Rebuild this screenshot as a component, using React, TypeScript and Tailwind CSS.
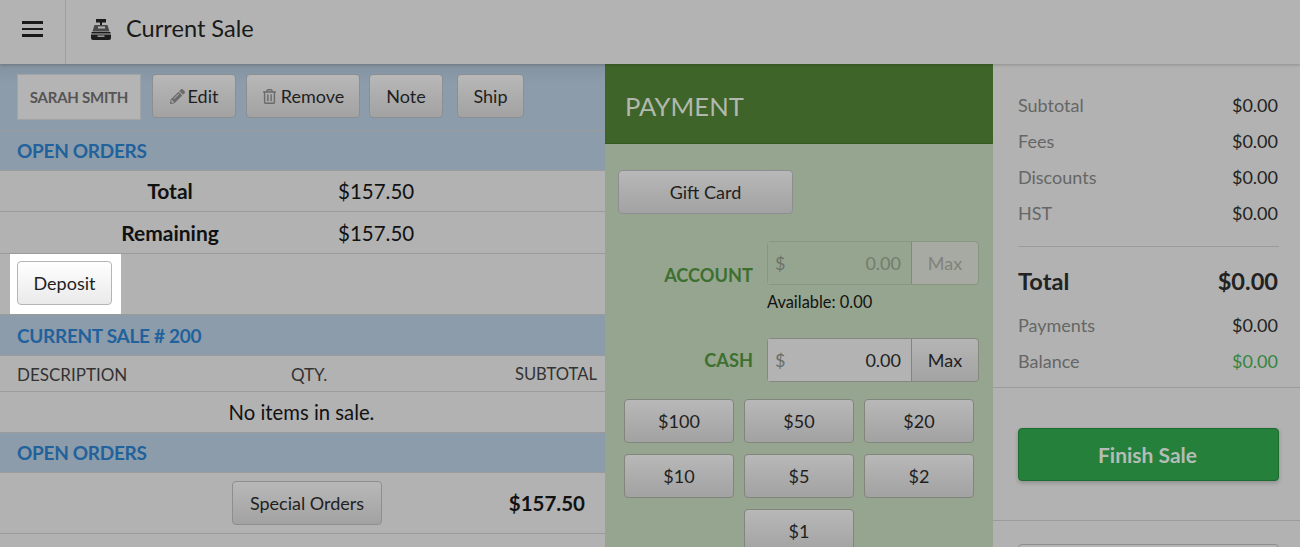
import { FaPencilAlt, FaRegTrashAlt } from "react-icons/fa";

const btn =
  "h-[44px] rounded border border-[#8b8f92] bg-gradient-to-b from-[#b8b8b8] to-[#a2a2a2] text-[18px] text-[#1f1f1f]";

const cashButtons = ["$100", "$50", "$20", "$10", "$5", "$2"];

const summary = [
  { label: "Subtotal", value: "$0.00" },
  { label: "Fees", value: "$0.00" },
  { label: "Discounts", value: "$0.00" },
  { label: "HST", value: "$0.00" },
];

function CashRegister() {
  return (
    <svg viewBox="0 0 22 21" className="h-[21px] w-[22px]" fill="#1c1c1c">
      <path d="M6 0h10v3.5h-4V6h-2V3.5H6z" />
      <path d="M4.5 6h13l2 6.5h-17z" fill="#4a4a4a" />
      <rect x="8" y="7.5" width="7" height="2" fill="#b3b3b3" />
      <path d="M1.5 13h19v1.5h-19z" />
      <path d="M1 15.5h20V19a2 2 0 0 1-2 2H3a2 2 0 0 1-2-2z" />
      <rect x="7.5" y="16.5" width="7" height="1.3" fill="#b3b3b3" />
    </svg>
  );
}

function SectionHeader({ title, className }: { title: string; className: string }) {
  return (
    <div className={`flex items-center border-b border-[#9b9b9b] bg-[#8c9cab] pl-[17px] pt-[2px] text-[19px] font-bold tracking-[-0.3px] text-[#22629c] ${className}`}>
      {title}
    </div>
  );
}

function TotalRow({ label, value, className }: { label: string; value: string; className: string }) {
  return (
    <div className={`flex items-center border-b border-[#9b9b9b] text-[#111] ${className}`}>
      <div className="w-[338px] pl-[2px] text-center text-[21px] font-bold">{label}</div>
      <div className="text-[20.5px]">{value}</div>
    </div>
  );
}

function PayInput({ label, disabled }: { label: string; disabled?: boolean }) {
  return (
    <div className="flex items-center">
      <div className={`w-[135px] pt-[2px] text-right text-[18.2px] font-bold text-[#3d7030] ${disabled ? "translate-y-[12px]" : ""}`}>
        {label}
      </div>
      <div className={`ml-[14px] flex h-[44px] w-[212px] rounded border border-[#84897f] text-[18px] ${disabled ? "border-[#89957f] opacity-90" : ""}`}>
        <div className={`flex w-[144px] items-center justify-between border-r border-[#7f8580] pl-[7px] pr-[10px] ${disabled ? "bg-[#96a58f] text-[#6e7a69]" : "bg-[#b3b3b3] text-[#222]"}`}>
          <span className="text-[#686e68]">$</span>
          <span>0.00</span>
        </div>
        <div className={`flex flex-1 items-center justify-center rounded-r ${disabled ? "bg-[#a9aba5] text-[#7d807b]" : "bg-gradient-to-b from-[#b5b5b5] to-[#a3a3a3] text-[#222]"}`}>
          Max
        </div>
      </div>
    </div>
  );
}

export default function App() {
  return (
    <div className="h-screen overflow-hidden bg-[#b2b2b2] font-['Lato','Open_Sans',sans-serif]">
      <header className="relative z-10 flex h-[64px] bg-[#b3b3b3] shadow-[0_1px_3px_rgba(0,0,0,0.2)]">
        <div className="flex w-[66px] items-center justify-center border-r border-[#a0a0a0] pb-[6px] pr-[1px]">
          <div className="flex w-[21px] flex-col gap-[4px]">
            <span className="h-[2.5px] bg-[#1a1a1a]" />
            <span className="h-[2.5px] bg-[#1a1a1a]" />
            <span className="h-[2.5px] bg-[#1a1a1a]" />
          </div>
        </div>
        <div className="ml-[24px] flex items-center gap-[14px] pb-[6px] text-[23.6px] text-[#1a1a1a]">
          <CashRegister />
          <span>Current Sale</span>
        </div>
      </header>

      <main className="flex h-[483px]">
        <section className="w-[605px] shrink-0">
          <div className="flex h-[67px] border-b border-[#9b9b9b] bg-gradient-to-b from-[#84929f] to-[#8c9cab] to-30% pl-[17px] pt-[10px]">
            <div className="mr-[11px] flex h-[46px] w-[124px] items-center justify-center border border-[#a0a4a6] bg-[#b4b4b4] text-[15px] font-bold tracking-[-0.25px] text-[#555]">
              SARAH SMITH
            </div>
            <button className={`${btn} mr-[10px] flex w-[84px] items-center justify-center gap-[3px]`}>
              <FaPencilAlt className="text-[15px] text-[#6b6b6b]" />
              Edit
            </button>
            <button className={`${btn} mr-[9px] flex w-[114px] items-center justify-center gap-[4px]`}>
              <FaRegTrashAlt className="text-[15px] text-[#6b6b6b]" />
              Remove
            </button>
            <button className={`${btn} mr-[14px] w-[74px]`}>Note</button>
            <button className={`${btn} w-[67px]`}>Ship</button>
          </div>
          <SectionHeader title="OPEN ORDERS" className="h-[40px]" />
          <TotalRow label="Total" value="$157.50" className="h-[41px]" />
          <TotalRow label="Remaining" value="$157.50" className="h-[42px] pt-[1px]" />
          <div className="h-[61px] border-b border-[#9b9b9b]">
            <div className="ml-[10px] h-[60px] w-[111px] bg-white pl-[7px] pt-[7px]">
              <button className="h-[44px] w-[95px] rounded border border-[#b5b5b5] bg-gradient-to-b from-white to-[#eaeaea] text-[18px] text-[#222]">
                Deposit
              </button>
            </div>
          </div>
          <SectionHeader title="CURRENT SALE # 200" className="h-[41px]" />
          <div className="flex h-[36px] items-center border-b border-[#9b9b9b] pl-[17px] pr-[8px] pt-[2px] text-[17px] text-[#333]">
            <div className="w-[274px]">DESCRIPTION</div>
            <div>QTY.</div>
            <div className="flex-1 text-right text-[16.6px]">SUBTOTAL</div>
          </div>
          <div className="flex h-[41px] items-center justify-center border-b border-[#9b9b9b] pr-[2px] pt-[1px] text-[20.3px] text-[#111]">
            No items in sale.
          </div>
          <SectionHeader title="OPEN ORDERS" className="h-[40px]" />
          <div className="flex h-[61px] items-center border-b border-[#9b9b9b] pl-[232px] pr-[20px]">
            <button className={`${btn} w-[150px]`}>Special Orders</button>
            <div className="flex-1 text-right text-[20.5px] font-bold text-[#111]">$157.50</div>
          </div>
        </section>

        <section className="w-[388px] shrink-0 bg-[#96a58f]">
          <div className="flex h-[80px] items-center border-b border-[#35591f] bg-[#3e6429] pl-[20px] pt-[5px] text-[25.6px] text-[#b2b8ad]">
            PAYMENT
          </div>
          <div className="pl-[13px] pt-[26px]">
            <button className={`${btn} w-[175px]`}>Gift Card</button>
          </div>
          <div className="mt-[27px] pl-[13px]">
            <PayInput label="ACCOUNT" disabled />
            <div className="ml-[149px] mt-[7px] h-[20px] text-[16.4px] leading-[20px] text-[#111]">Available: 0.00</div>
          </div>
          <div className="mt-[26px] pl-[13px]">
            <PayInput label="CASH" />
          </div>
          <div className="ml-[19px] mt-[17px] grid w-[350px] grid-cols-3 gap-x-[10px] gap-y-[11px]">
            {cashButtons.map((amount) => (
              <button key={amount} className={`${btn} border-[#80867e]`}>
                {amount}
              </button>
            ))}
            <button className={`${btn} col-start-2 border-[#80867e]`}>$1</button>
          </div>
        </section>

        <section className="flex-1">
          <div className="border-b border-[#9b9b9b] pl-[25px] pr-[21px] pt-[29px]">
            <div className="flex flex-col gap-[12px] border-b border-[#9b9b9b] pb-[21px] text-[18px]">
              {summary.map((row) => (
                <div key={row.label} className="flex h-[24px] items-center justify-between pr-[1px]">
                  <span className="text-[#666]">{row.label}</span>
                  <span className="text-[#222]">{row.value}</span>
                </div>
              ))}
            </div>
            <div className="flex h-[66px] items-center justify-between pr-[1px] pt-[4px] text-[23.6px] font-bold text-[#222]">
              <span>Total</span>
              <span>$0.00</span>
            </div>
            <div className="flex h-[24px] items-center justify-between pr-[1px] text-[18px]">
              <span className="text-[#666]">Payments</span>
              <span className="text-[#222]">$0.00</span>
            </div>
            <div className="mb-[14px] mt-[12px] flex h-[24px] items-center justify-between pr-[1px] text-[18px]">
              <span className="text-[#666]">Balance</span>
              <span className="text-[#358540]">$0.00</span>
            </div>
          </div>
          <div className="border-b border-[#9b9b9b] pb-[39px] pl-[25px] pr-[21px] pt-[40px]">
            <button className="h-[53px] w-full rounded border border-[#1c6b2f] bg-[#25803c] pr-[2px] text-[21px] font-bold text-[#b4bdb5] shadow-[0_2px_4px_rgba(0,0,0,0.2)]">
              Finish Sale
            </button>
          </div>
          <div className="pl-[25px] pr-[21px] pt-[23px]">
            <div className="h-[44px] rounded border border-[#8b8f92] bg-[#b5b5b5]" />
          </div>
        </section>
      </main>
    </div>
  );
}
